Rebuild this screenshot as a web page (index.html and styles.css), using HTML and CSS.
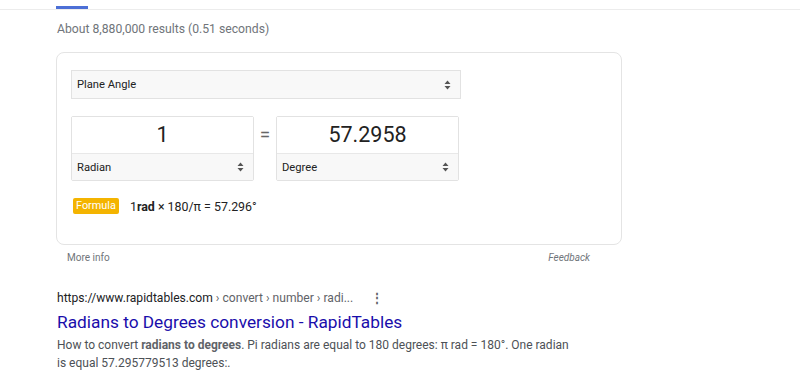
FILE: index.html
```html
<!DOCTYPE html>
<html>
<head>
<meta charset="utf-8">
<link rel="stylesheet" href="styles.css">
</head>
<body>
<div class="tabs"><div class="tab-active"></div></div>
<div class="stats">About 8,880,000 results (0.51 seconds)</div>
<div class="card">
  <div class="select wide"><span>Plane Angle</span><span class="arrows"><svg width="7" height="10" viewBox="0 0 7 10"><path d="M3.5 0.5L6.5 4H0.5z M3.5 9.5L6.5 6H0.5z" fill="#555"/></svg></span></div>
  <div class="conv">
    <div class="box">
      <div class="num">1</div>
      <div class="select unit"><span>Radian</span><span class="arrows"><svg width="7" height="10" viewBox="0 0 7 10"><path d="M3.5 0.5L6.5 4H0.5z M3.5 9.5L6.5 6H0.5z" fill="#555"/></svg></span></div>
    </div>
    <div class="eq">=</div>
    <div class="box">
      <div class="num">57.2958</div>
      <div class="select unit"><span>Degree</span><span class="arrows"><svg width="7" height="10" viewBox="0 0 7 10"><path d="M3.5 0.5L6.5 4H0.5z M3.5 9.5L6.5 6H0.5z" fill="#555"/></svg></span></div>
    </div>
  </div>
  <div class="formula"><span class="badge">Formula</span><span class="ftext">1<b>rad</b> × 180/π = 57.296°</span></div>
</div>
<div class="cardfoot"><span>More info</span><span class="fb">Feedback</span></div>
<div class="result">
  <div class="url"><span>https://www.rapidtables.com <span class="crumb">› convert › number › radi...</span></span><span class="dots">⋮</span></div>
  <div class="title">Radians to Degrees conversion - RapidTables</div>
  <div class="snippet">How to convert <b>radians to degrees</b>. Pi radians are equal to 180 degrees: π rad = 180°. One radian<br>is equal 57.295779513 degrees:.</div>
</div>
</body>
</html>
```
FILE: styles.css
```css
html, body { margin: 0; padding: 0; background: #fff; }
body { font-family: Roboto, Arial, sans-serif; color: #202124; }
.tabs { height: 9px; border-bottom: 1px solid #ececec; position: relative; }
.tab-active { position: absolute; left: 56px; bottom: 0; width: 32px; height: 3px; background: #4c6fd6; }
.stats { margin: 8px 0 0 57px; font-size: 12.2px; line-height: 22px; color: #70757a; }
.card { margin: 12px 0 0 56px; border: 1px solid #e4e4e4; border-radius: 8px; padding: 17px 0 0 14px; box-sizing: border-box; width: 566px; height: 193px; }
.select { display: flex; align-items: center; justify-content: space-between; background: #f8f8f8; font-size: 11.2px; color: #222; }
.select .arrows { display: flex; align-items: center; }
.select.wide { width: 390px; height: 29px; border: 1px solid #e2e2e2; box-sizing: border-box; padding: 0 9px 0 5px; }
.conv { display: flex; margin-top: 17px; align-items: stretch; }
.box { width: 183px; height: 65px; border: 1px solid #e2e2e2; box-sizing: border-box; border-radius: 2px; display: flex; flex-direction: column; }
.num { height: 36px; border-bottom: 1px solid #e8e8e8; font-size: 21.5px; line-height: 36px; text-align: center; color: #222; background: #fff; }
.select.unit { flex: 1; padding: 0 9px 0 5px; }
.eq { width: 22px; text-align: center; font-size: 19px; line-height: 38px; color: #666; }
.formula { display: flex; align-items: center; margin-top: 17px; padding-left: 2px; }
.badge { background: #f4b400; color: #fff; font-size: 10.9px; line-height: 16px; padding: 0 3px; border-radius: 2px; height: 16px; }
.ftext { margin-left: 11px; font-size: 12.4px; color: #222; }
.ftext b { font-weight: 700; }
.cardfoot { width: 523px; margin-left: 67px; display: flex; justify-content: space-between; font-size: 10px; color: #70757a; margin-top: 6px; line-height: 14px; }
.fb { font-style: italic; }
.result { margin: 24px 0 0 57px; }
.url { font-size: 12.1px; line-height: 18px; color: #202124; display: flex; }
.crumb { color: #5f6368; }
.dots { margin-left: 18px; color: #5f6368; font-weight: bold; }
.title { font-size: 17.3px; line-height: 24px; color: #1a0dab; margin-top: 3px; }
.snippet { font-size: 12px; line-height: 18px; color: #4d5156; margin-top: 2px; }
.snippet b { color: #5f6368; }
```
